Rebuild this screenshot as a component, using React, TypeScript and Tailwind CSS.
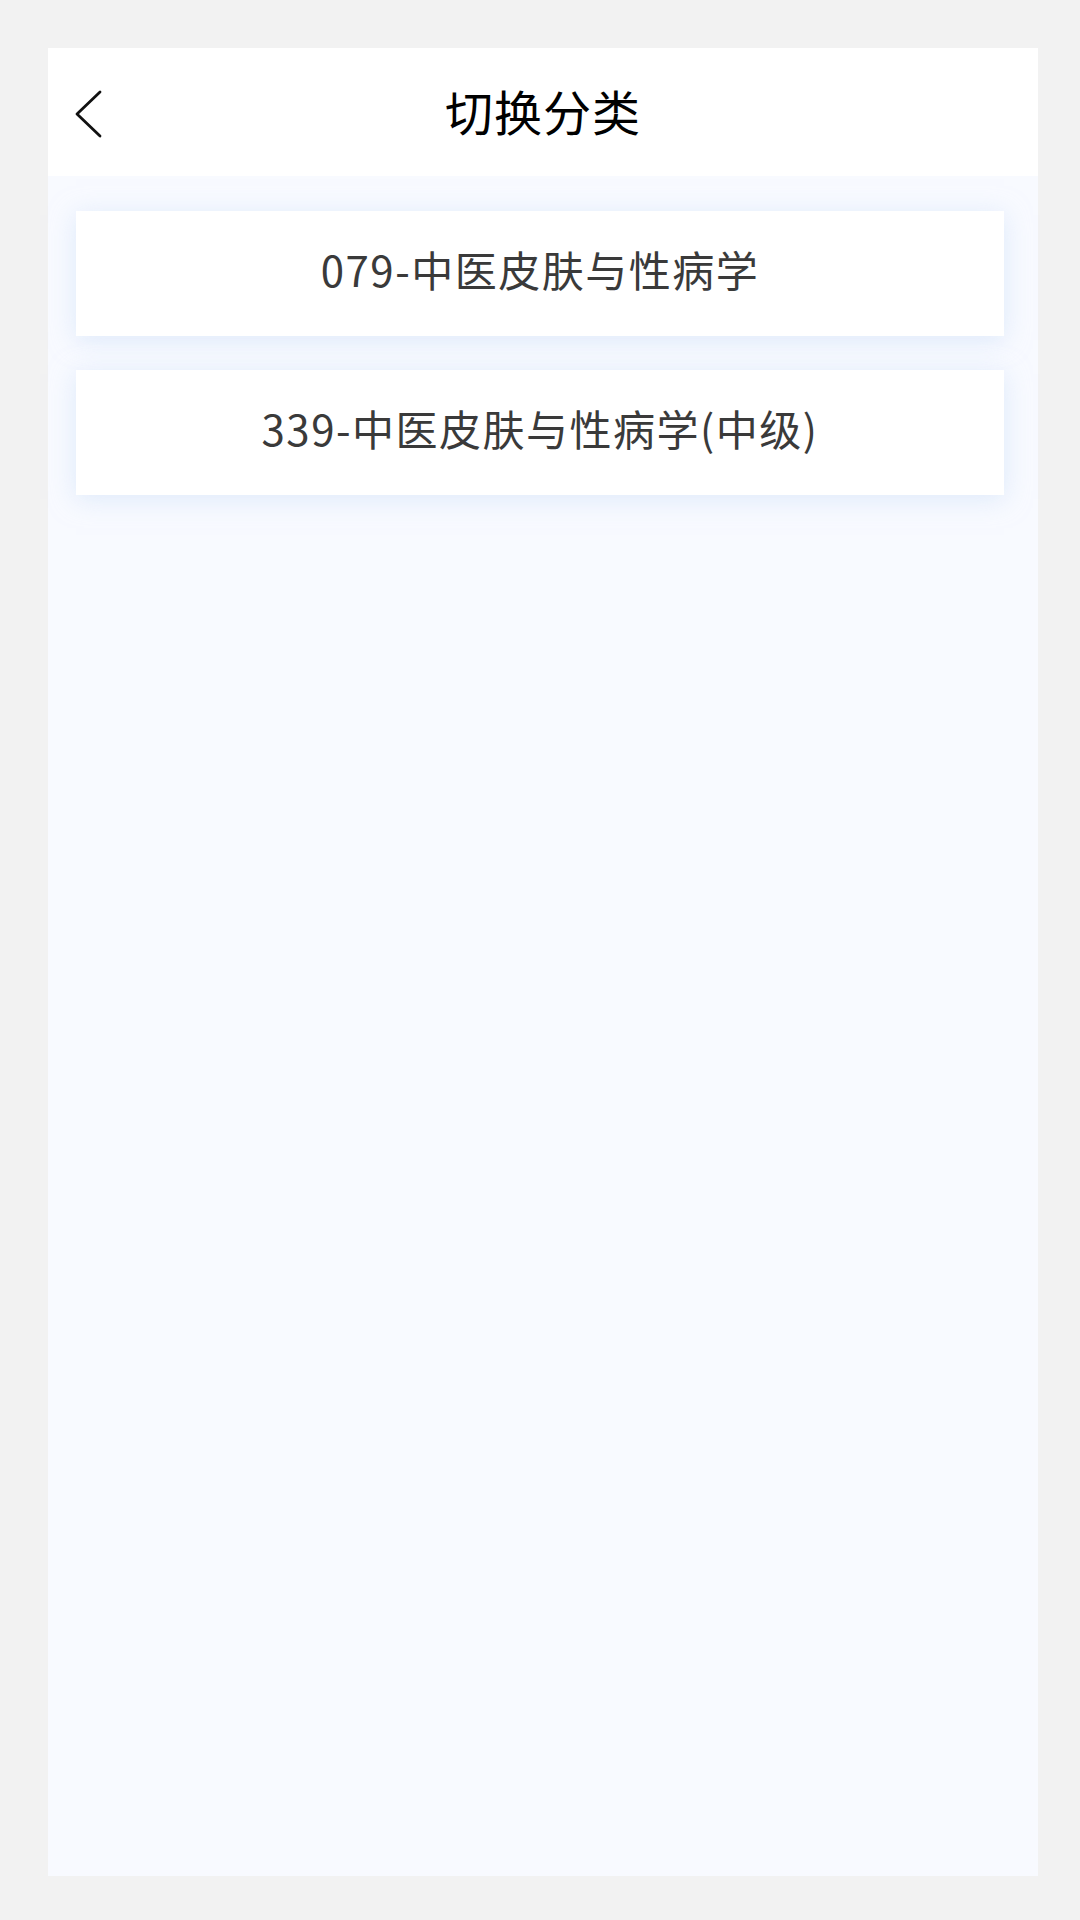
export default function App() {
  const items = ['079-中医皮肤与性病学', '339-中医皮肤与性病学(中级)'];

  return (
    <div
      className="min-h-[1920px] bg-[#f2f2f2] pt-[48px] pl-[48px]"
      style={{ fontFamily: '"Noto Sans CJK SC", "Noto Sans", sans-serif' }}
    >
      <div className="flex h-[1828px] w-[990px] flex-col bg-[#f8faff]">
        <header className="relative flex h-[128px] items-center justify-center bg-white pb-[5px]">
          <button className="absolute left-[24px] top-[42px] flex h-[48px] w-[32px] items-center justify-center">
            <svg width="30" height="50" viewBox="0 0 30 50" fill="none">
              <path d="M27 3 L4 25 L27 47" stroke="#111" strokeWidth="2.8" strokeLinecap="round" strokeLinejoin="round" />
            </svg>
          </button>
          <h1 className="text-[48px] leading-none tracking-[1px] text-black">切换分类</h1>
        </header>

        <div className="flex flex-col gap-[34px] pt-[35px] pl-[28px]">
          {items.map((item) => (
            <div
              key={item}
              className="flex h-[125px] w-[928px] items-center justify-center bg-white pb-[10px] text-[42px] tracking-[1.5px] text-[#3a3a3a] shadow-[0_4px_24px_rgba(200,220,245,0.55)]"
            >
              {item}
            </div>
          ))}
        </div>
      </div>
    </div>
  );
}
